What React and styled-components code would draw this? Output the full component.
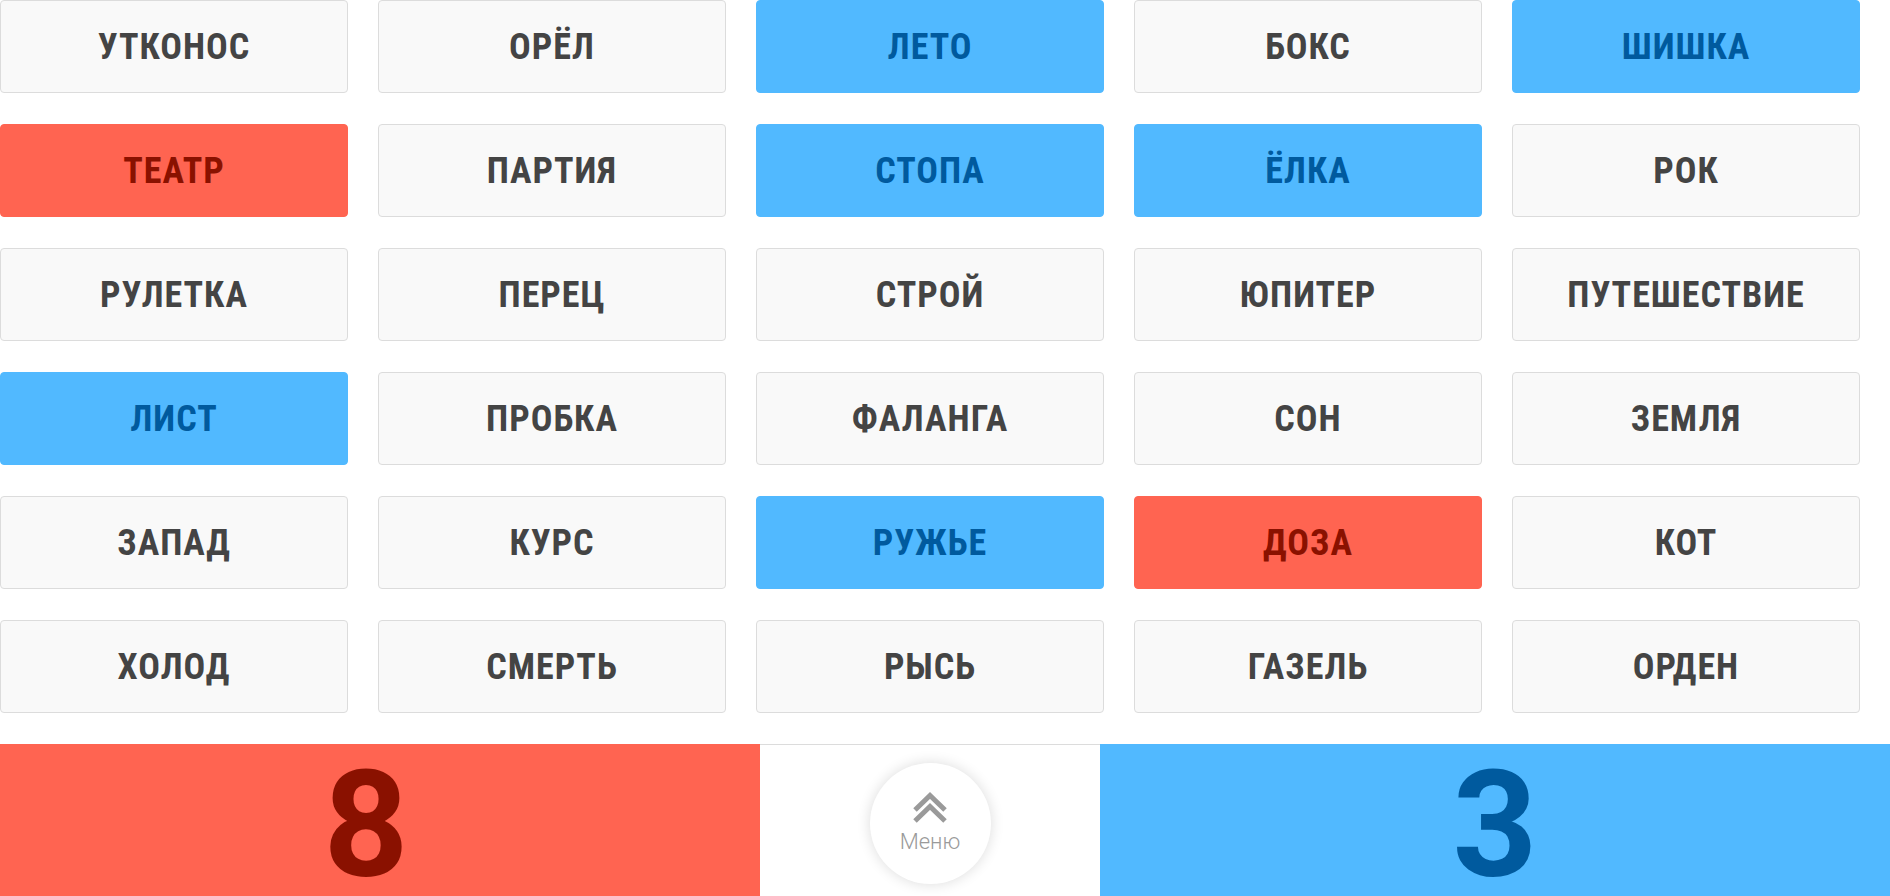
import React from "react";
import styled, { createGlobalStyle, css } from "styled-components";

const Global = createGlobalStyle`
  html, body { margin: 0; padding: 0; background: #fff; }
  body { font-family: Roboto, "Noto Sans", Arial, sans-serif; overflow: hidden; }
  * { box-sizing: border-box; }
`;

const Page = styled.div`
  width: 1890px;
  height: 896px;
  display: flex;
  flex-direction: column;
`;

const Board = styled.div`
  display: grid;
  grid-template-columns: repeat(5, 348px);
  grid-auto-rows: 93px;
  column-gap: 30px;
  row-gap: 31px;
  padding: 0 30px 31px 0;
`;

const variants = {
  neutral: css`
    background: #f9f9f9;
    border: 1px solid #dcdcdc;
    color: #444444;
  `,
  red: css`
    background: #ff6451;
    border: 1px solid #ff6451;
    color: #8a1100;
  `,
  blue: css`
    background: #51b9ff;
    border: 1px solid #51b9ff;
    color: #005a9e;
  `,
};

const Card = styled.div`
  display: flex;
  align-items: center;
  justify-content: center;
  border-radius: 4px;
  ${(p) => variants[p.$kind]}
`;

const Word = styled.span`
  display: inline-block;
  font-family: Roboto, "Noto Sans", sans-serif;
  font-weight: 700;
  font-size: 36px;
  line-height: 1;
  font-stretch: 87.5%;
  letter-spacing: 1px;
  text-transform: uppercase;
`;

const Footer = styled.div`
  flex: 1;
  display: grid;
  grid-template-columns: 760px 340px 1fr;
`;

const Score = styled.div`
  display: flex;
  align-items: center;
  justify-content: center;
  padding: ${(p) => p.$pad || "0"};
  font-family: Roboto, sans-serif;
  font-weight: 700;
  font-size: 148px;
  line-height: 120px;
  background: ${(p) => (p.$team === "red" ? "#ff6451" : "#51b9ff")};
  color: ${(p) => (p.$team === "red" ? "#8a1100" : "#005a9e")};
`;

const Middle = styled.div`
  border-top: 1px solid #dcdcdc;
  display: flex;
  justify-content: center;
  padding-top: 18px;
`;

const MenuButton = styled.button`
  width: 121px;
  height: 121px;
  border-radius: 50%;
  border: none;
  background: #fff;
  box-shadow: 0 0 14px rgba(0, 0, 0, 0.14);
  display: flex;
  flex-direction: column;
  align-items: center;
  justify-content: center;
  gap: 7px;
  padding: 0 0 2px;
  cursor: pointer;
`;

const MenuLabel = styled.span`
  font-family: Roboto, sans-serif;
  font-weight: 300;
  font-size: 22px;
  line-height: 1;
  color: #9a9a9a;
`;

const words = [
  ["Утконос", "neutral"], ["Орёл", "neutral"], ["Лето", "blue"], ["Бокс", "neutral"], ["Шишка", "blue"],
  ["Театр", "red"], ["Партия", "neutral"], ["Стопа", "blue"], ["Ёлка", "blue"], ["Рок", "neutral"],
  ["Рулетка", "neutral"], ["Перец", "neutral"], ["Строй", "neutral"], ["Юпитер", "neutral"], ["Путешествие", "neutral"],
  ["Лист", "blue"], ["Пробка", "neutral"], ["Фаланга", "neutral"], ["Сон", "neutral"], ["Земля", "neutral"],
  ["Запад", "neutral"], ["Курс", "neutral"], ["Ружье", "blue"], ["Доза", "red"], ["Кот", "neutral"],
  ["Холод", "neutral"], ["Смерть", "neutral"], ["Рысь", "neutral"], ["Газель", "neutral"], ["Орден", "neutral"],
];

const Chevrons = () => (
  <svg width="36" height="32" viewBox="0 0 36 32" fill="none">
    <polyline points="3,18 18,3.5 33,18" stroke="#9a9a9a" strokeWidth="5" />
    <polyline points="3,29 18,14.5 33,29" stroke="#9a9a9a" strokeWidth="5" />
  </svg>
);

export default function App() {
  return (
    <Page>
      <Global />
      <Board>
        {words.map(([w, k]) => (
          <Card key={w} $kind={k}>
            <Word>{w}</Word>
          </Card>
        ))}
      </Board>
      <Footer>
        <Score $team="red" $pad="12px 28px 0 0">8</Score>
        <Middle>
          <MenuButton>
            <Chevrons />
            <MenuLabel>Меню</MenuLabel>
          </MenuButton>
        </Middle>
        <Score $team="blue" $pad="12px 0 0 0">3</Score>
      </Footer>
    </Page>
  );
}
